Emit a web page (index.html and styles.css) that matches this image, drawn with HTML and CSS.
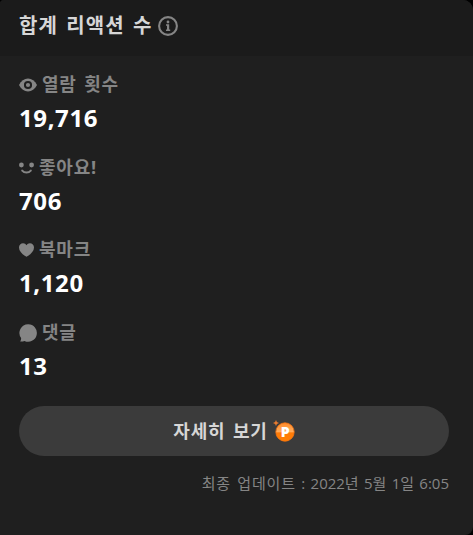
FILE: index.html
```
<!DOCTYPE html>
<html lang="ko">

<head>
    <meta charset="utf-8">
    <meta name="viewport" content="width=device-width, initial-scale=1.0">
    <title>합계 리액션 수</title>
    <link rel="stylesheet" href="styles.css">
</head>

<body>
    <section class="card">
        <header class="card-header">
            <h2 class="title">합계 리액션 수</h2>
            <svg class="info" width="20" height="20" viewBox="0 0 20 20">
                <circle cx="10" cy="10" r="8.9" fill="none" stroke="#858585" stroke-width="2.1" />
                <circle cx="10" cy="6" r="1.4" fill="#858585" />
                <path d="M8 8.300h3.200v5.200h1V15H8v-1.500h1V9.800H8z" fill="#858585" />
            </svg>
        </header>

        <main class="card-body">
            <dl class="stats">
                <div class="stat">
                    <dt class="label">
                        <svg width="18" height="14" viewBox="0 0 18 14">
                            <path d="M0 7C2 2.800 5.300.6 9 .6S16 2.800 18 7c-2 4.200-5.300 6.400-9 6.400S2 11.200 0 7z" fill="#858585" />
                            <circle cx="9" cy="7" r="3.100" fill="#858585" stroke="#1f1f1f" stroke-width="2" />
                        </svg>
                        <span>열람 횟수</span>
                    </dt>
                    <dd class="value">19,716</dd>
                </div>
                <div class="stat">
                    <dt class="label">
                        <svg width="15" height="12" viewBox="0 0 15 12">
                            <circle cx="2.400" cy="3" r="2.400" fill="#858585" />
                            <circle cx="12.600" cy="3" r="2.400" fill="#858585" />
                            <path d="M3.200 8.600c2.200 2.500 6.400 2.500 8.600 0" fill="none" stroke="#858585" stroke-width="2" stroke-linecap="round" />
                        </svg>
                        <span>좋아요!</span>
                    </dt>
                    <dd class="value">706</dd>
                </div>
                <div class="stat">
                    <dt class="label">
                        <svg width="15" height="14" viewBox="0 0 15 14">
                            <path d="M7.500 13.800C3.200 11.300 0 8.200 0 4.500 0 2 1.800.2 4.100.2c1.500 0 2.700.8 3.400 2.100C8.200 1 9.400.2 10.900.2 13.200.2 15 2 15 4.500c0 3.700-3.200 6.800-7.500 9.300z" fill="#858585" />
                        </svg>
                        <span>북마크</span>
                    </dt>
                    <dd class="value">1,120</dd>
                </div>
                <div class="stat">
                    <dt class="label">
                        <svg width="18" height="18" viewBox="0 0 18 18">
                            <path d="M9.200.3a8.700 8.700 0 1 1-3.700 16.600c-1.200.5-2.700.7-4.300.6.700-1.100 1-2.300.9-3.400A8.700 8.700 0 0 1 9.200.3z" fill="#858585" />
                        </svg>
                        <span>댓글</span>
                    </dt>
                    <dd class="value">13</dd>
                </div>
            </dl>

            <button class="more">
                <span>자세히 보기</span>
                <svg width="22" height="22" viewBox="0 0 22 22">
                    <defs>
                        <linearGradient id="coin" x1="0" y1="0" x2="0" y2="1">
                            <stop offset="0" stop-color="#ff8a2a" />
                            <stop offset=".48" stop-color="#ffad5c" />
                            <stop offset=".55" stop-color="#ff7a08" />
                            <stop offset="1" stop-color="#ff8000" />
                        </linearGradient>
                    </defs>
                    <circle cx="12" cy="12" r="9.200" fill="url(#coin)" stroke="#f87410" stroke-width=".8" />
                    <path d="M3 0l.9 2.100L6 3l-2.100.9L3 6l-.9-2.100L0 3l2.100-.9z" fill="#e87a30" />
                    <text class="coin-letter" x="12.300" y="16.600" text-anchor="middle">P</text>
                </svg>
            </button>

            <p class="updated"><span class="updated-label">최종 업데이트</span> : 2022년 5월 1일 6:05</p>
        </main>
    </section>
</body>

</html>
```
FILE: styles.css
```
body {
    margin: 0;
    background-color: #000;
    font-family: 'Open Sans', 'Noto Sans CJK KR', sans-serif;
    color: #858585;
}

.card {
    box-sizing: border-box;
    height: 535px;
    background-color: #1f1f1f;
    border-radius: 4px 10px 8px 0;
    overflow: hidden;
}

.card-header {
    display: flex;
    align-items: center;
    box-sizing: border-box;
    height: 56px;
    padding: 0 19px 4px;
    background-color: #1b1b1b;
}

.title {
    width: 134px;
    margin: 0 5px 0 0;
    font-size: 20px;
    font-weight: 700;
    line-height: 28px;
    letter-spacing: 1.1px;
    word-spacing: 2px;
    white-space: nowrap;
    color: #d6d6d6;
}

.card-body {
    padding: 14px 24px 0 19px;
}

.stats {
    margin: 0;
}

.stat {
    height: 82.5px;
}

.label {
    display: flex;
    align-items: center;
    gap: 5px;
    height: 28px;
    font-size: 18px;
    font-weight: 700;
    letter-spacing: .8px;
    word-spacing: 2px;
    white-space: nowrap;
}

.label svg {
    position: relative;
    top: 1px;
}

.label span {
    margin-top: -2px;
}

.value {
    height: 38px;
    margin: 0;
    font-size: 24px;
    font-weight: 700;
    line-height: 39px;
    letter-spacing: .6px;
    color: #fff;
}

.more {
    display: flex;
    align-items: center;
    justify-content: center;
    gap: 5px;
    width: 100%;
    height: 50px;
    margin-top: 6px;
    padding: 0;
    border: none;
    border-radius: 25px;
    background-color: #3b3b3b;
    font-family: inherit;
    font-size: 18px;
    font-weight: 700;
    letter-spacing: .8px;
    word-spacing: 2px;
    color: #d6d6d6;
}

.more span {
    margin-top: -2px;
}

.coin-letter {
    font-family: 'Open Sans', sans-serif;
    font-size: 14px;
    font-weight: 800;
    letter-spacing: 0;
    fill: #fff;
}

.updated {
    margin: 16px 0 0;
    font-size: 15px;
    line-height: 22px;
    text-align: right;
    word-spacing: 1.4px;
    white-space: nowrap;
}

.updated-label {
    letter-spacing: .9px;
}
```
